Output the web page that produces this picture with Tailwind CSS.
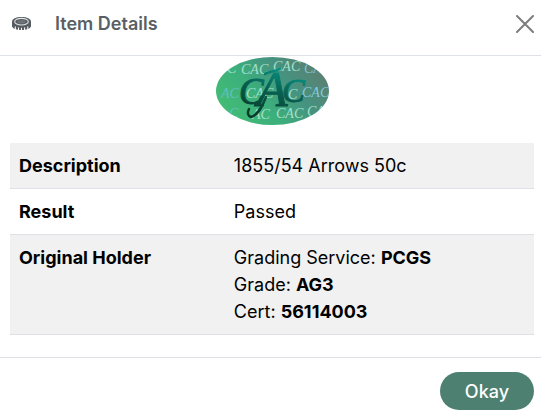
<!DOCTYPE html>
<html lang="en">
<head>
    <meta charset="UTF-8">
    <meta name="viewport" content="width=device-width, initial-scale=1.0">
    <title>Item Details</title>
    <script src="https://cdn.jsdelivr.net/npm/@tailwindcss/browser@4"></script>
</head>
<body class="bg-white font-['Inter',sans-serif] text-lg leading-[27px] text-black">
    <div role="dialog" aria-labelledby="title" class="flex min-h-screen flex-col">
        <!-- Header -->
        <header class="flex h-14 items-center border-b border-[#dee2e6] pr-1 pb-2 pl-3">
            <svg class="h-4 w-5 shrink-0" viewBox="0 0 20 16" aria-hidden="true">
                <path d="M0 6C0 2.8 4 1 9.500 1S19 2.800 19 6v4.500C18 13 14 14 9.500 14S1 13 0 10.500Z" fill="#555b60"/>
                <ellipse cx="9.500" cy="5.700" rx="6.800" ry="3.300" fill="#555b60" stroke="#e4e6e7" stroke-width="1.100"/>
                <ellipse cx="9.500" cy="5.800" rx="4.300" ry="1.800" fill="#6c7276"/>
                <path d="M3.300 10.500V15M6.500 11.500V15M9.500 11.800V15M12.600 11.500V15M15.800 10.500V15" stroke="#fff" stroke-width="1.100"/>
            </svg>
            <h1 id="title" class="ml-[23px] font-semibold text-[#595f64]">Item Details</h1>
            <button type="button" aria-label="Close" class="ml-auto flex size-6 items-center justify-center">
                <svg class="size-[18px]" viewBox="0 0 18 18" fill="none" stroke="#7d7d7d" stroke-width="2" stroke-linecap="round" aria-hidden="true">
                    <path d="M1 1l16 16M17 1L1 17"/>
                </svg>
            </button>
        </header>

        <!-- Body -->
        <main class="pt-px pr-[7px] pb-[22px] pl-2.5">
            <svg class="mx-auto mb-[18px] block h-[68px] w-[113px]" viewBox="0 0 113 68" role="img" aria-label="CAC">
                <defs>
                    <linearGradient id="oval" x1="0" y1="0.700" x2="1" y2="0.200">
                        <stop offset="0" stop-color="#43bd74"/>
                        <stop offset="0.350" stop-color="#3caf7c"/>
                        <stop offset="0.650" stop-color="#469280"/>
                        <stop offset="1" stop-color="#5f7d70"/>
                    </linearGradient>
                    <linearGradient id="ink" gradientUnits="userSpaceOnUse" x1="65" y1="12" x2="50" y2="60">
                        <stop offset="0" stop-color="#079080"/>
                        <stop offset="0.450" stop-color="#086052"/>
                        <stop offset="1" stop-color="#063d2a"/>
                    </linearGradient>
                    <clipPath id="edge"><ellipse cx="56.500" cy="34" rx="56.500" ry="34"/></clipPath>
                </defs>
                <g clip-path="url(#edge)" font-family="Liberation Serif, serif" font-style="italic">
                    <rect width="113" height="68" fill="url(#oval)"/>
                    <g font-size="14" fill="#a4e0cc">
                        <text x="11" y="16">C</text>
                        <text x="25" y="17">CAC</text>
                        <text x="57" y="14">CAC</text>
                        <text x="88" y="16" fill="#83c2d6">CA</text>
                        <text x="5" y="41" fill="#62bfc6">AC</text>
                        <text x="30" y="41">CAC</text>
                        <text x="72" y="42">C</text>
                        <text x="86" y="40" fill="#86c9dc">CAC</text>
                        <text x="13" y="61" fill="#62bfc6">C</text>
                        <text x="36" y="62">AC</text>
                        <text x="60" y="61">CAC</text>
                        <text x="91" y="59">CA</text>
                    </g>
                    <!-- Swash of the large A -->
                    <path d="M50 40C46 50 42 58 35 60C32 59 31 56 33 52M49 17C53 14 58 15 64 12" fill="none" stroke="url(#ink)" stroke-width="2.500" stroke-linecap="round"/>
                    <g fill="url(#ink)" stroke="url(#ink)" stroke-width="1">
                        <text x="23" y="47" font-size="37">C</text>
                        <text x="41" y="49" font-size="50">A</text>
                        <text x="66" y="45" font-size="34">C</text>
                    </g>
                </g>
            </svg>

            <table class="w-full table-fixed border-collapse text-left align-top">
                <colgroup>
                    <col class="w-[41%]">
                    <col>
                </colgroup>
                <tbody>
                    <tr class="border-b border-[#dee2e6] bg-[#f1f1f1]">
                        <th scope="row" class="p-[9px] align-top font-bold">Description</th>
                        <td class="p-[9px] align-top">1855/54 Arrows 50c</td>
                    </tr>
                    <tr class="border-b border-[#dee2e6]">
                        <th scope="row" class="p-[9px] align-top font-bold">Result</th>
                        <td class="p-[9px] align-top">Passed</td>
                    </tr>
                    <tr class="border-b border-[#dee2e6] bg-[#f1f1f1]">
                        <th scope="row" class="p-[9px] align-top font-bold">Original Holder</th>
                        <td class="p-[9px] align-top">
                            <div>Grading Service: <b>PCGS</b></div>
                            <div>Grade: <b>AG3</b></div>
                            <div>Cert: <b>56114003</b></div>
                        </td>
                    </tr>
                </tbody>
            </table>
        </main>

        <!-- Footer -->
        <footer class="flex justify-end border-t border-[#dee2e6] pt-3.5 pr-[7px] pb-1.5">
            <button type="button" class="h-[38px] rounded-full bg-[#4d8070] px-[25px] font-medium text-white">Okay</button>
        </footer>
    </div>
</body>
</html>
